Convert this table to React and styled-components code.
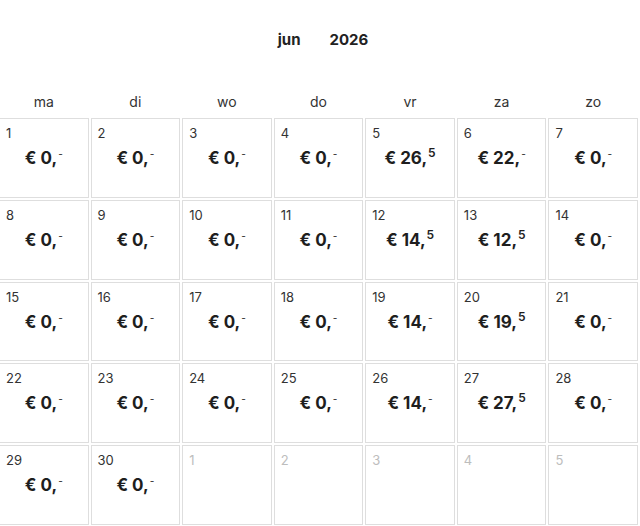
import styled, { createGlobalStyle } from "styled-components";

const GlobalStyle = createGlobalStyle`
  html, body {
    margin: 0;
    padding: 0;
    background: #ffffff;
    font-family: Inter, "Noto Sans", "Liberation Sans", sans-serif;
    color: #222222;
    overflow: hidden;
  }
`;

const weekdays = ["ma", "di", "wo", "do", "vr", "za", "zo"];

// bedrag in euro's, per dag van juni 2026
const prices = {
  5: [26, "5"], 6: [22, "-"],
  12: [14, "5"], 13: [12, "5"],
  19: [14, "-"], 20: [19, "5"],
  26: [14, "-"], 27: [27, "5"],
};

function buildDays() {
  const days = [];
  for (let d = 1; d <= 30; d++) {
    const p = prices[d] || [0, "-"];
    days.push({ day: d, euro: p[0], cents: p[1], other: false });
  }
  for (let d = 1; d <= 5; d++) days.push({ day: d, other: true });
  return days;
}

export default function App() {
  const days = buildDays();
  return (
    <>
      <GlobalStyle />
      <Page>
        <Title>
          <span>jun</span>
          <span>2026</span>
        </Title>
        <Weekdays>
          {weekdays.map((w) => (
            <Weekday key={w}>{w}</Weekday>
          ))}
        </Weekdays>
        <Grid>
          {days.map((d, i) => (
            <Cell key={i}>
              <DayNumber $other={d.other}>{d.day}</DayNumber>
              {!d.other && (
                <Price>
                  € {d.euro},<Sup $dash={d.cents === "-"}>{d.cents}</Sup>
                </Price>
              )}
            </Cell>
          ))}
        </Grid>
      </Page>
    </>
  );
}

const Page = styled.div`
  width: 640px;
  height: 526px;
  overflow: hidden;
`;

const Title = styled.div`
  height: 78px;
  display: flex;
  align-items: center;
  justify-content: center;
  gap: 29px;
  padding-left: 6px;
  box-sizing: border-box;
  font-size: 15px;
  font-weight: 700;
  color: #222222;
`;

const Weekdays = styled.div`
  display: grid;
  grid-template-columns: repeat(7, 1fr);
  column-gap: 2px;
  width: 639px;
  margin-left: -1px;
  height: 40px;
  align-items: end;
  padding-bottom: 8px;
  box-sizing: border-box;
`;

const Weekday = styled.div`
  text-align: center;
  font-size: 14px;
  line-height: 16px;
  color: #333333;
`;

const Grid = styled.div`
  display: grid;
  grid-template-columns: repeat(7, 1fr);
  grid-auto-rows: 79.75px;
  gap: 2px;
  width: 639px;
  margin-left: -1px;
`;

const Cell = styled.div`
  border: 1px solid #dedede;
  padding: 6px 6px;
  display: flex;
  flex-direction: column;
  min-width: 0;
`;

const DayNumber = styled.div`
  font-size: 13px;
  line-height: 16px;
  color: ${(p) => (p.$other ? "#bdbdbd" : "#333333")};
`;

const Price = styled.div`
  margin-top: 6px;
  text-align: center;
  font-size: 17px;
  line-height: 22px;
  font-weight: 700;
  color: #1e1e1e;
  white-space: nowrap;
`;

const Sup = styled.sup`
  font-size: ${(p) => (p.$dash ? "10px" : "12px")};
  font-weight: ${(p) => (p.$dash ? 400 : 600)};
  vertical-align: top;
  position: relative;
  top: ${(p) => (p.$dash ? "-4px" : "-5px")};
  margin-left: 1px;
`;
